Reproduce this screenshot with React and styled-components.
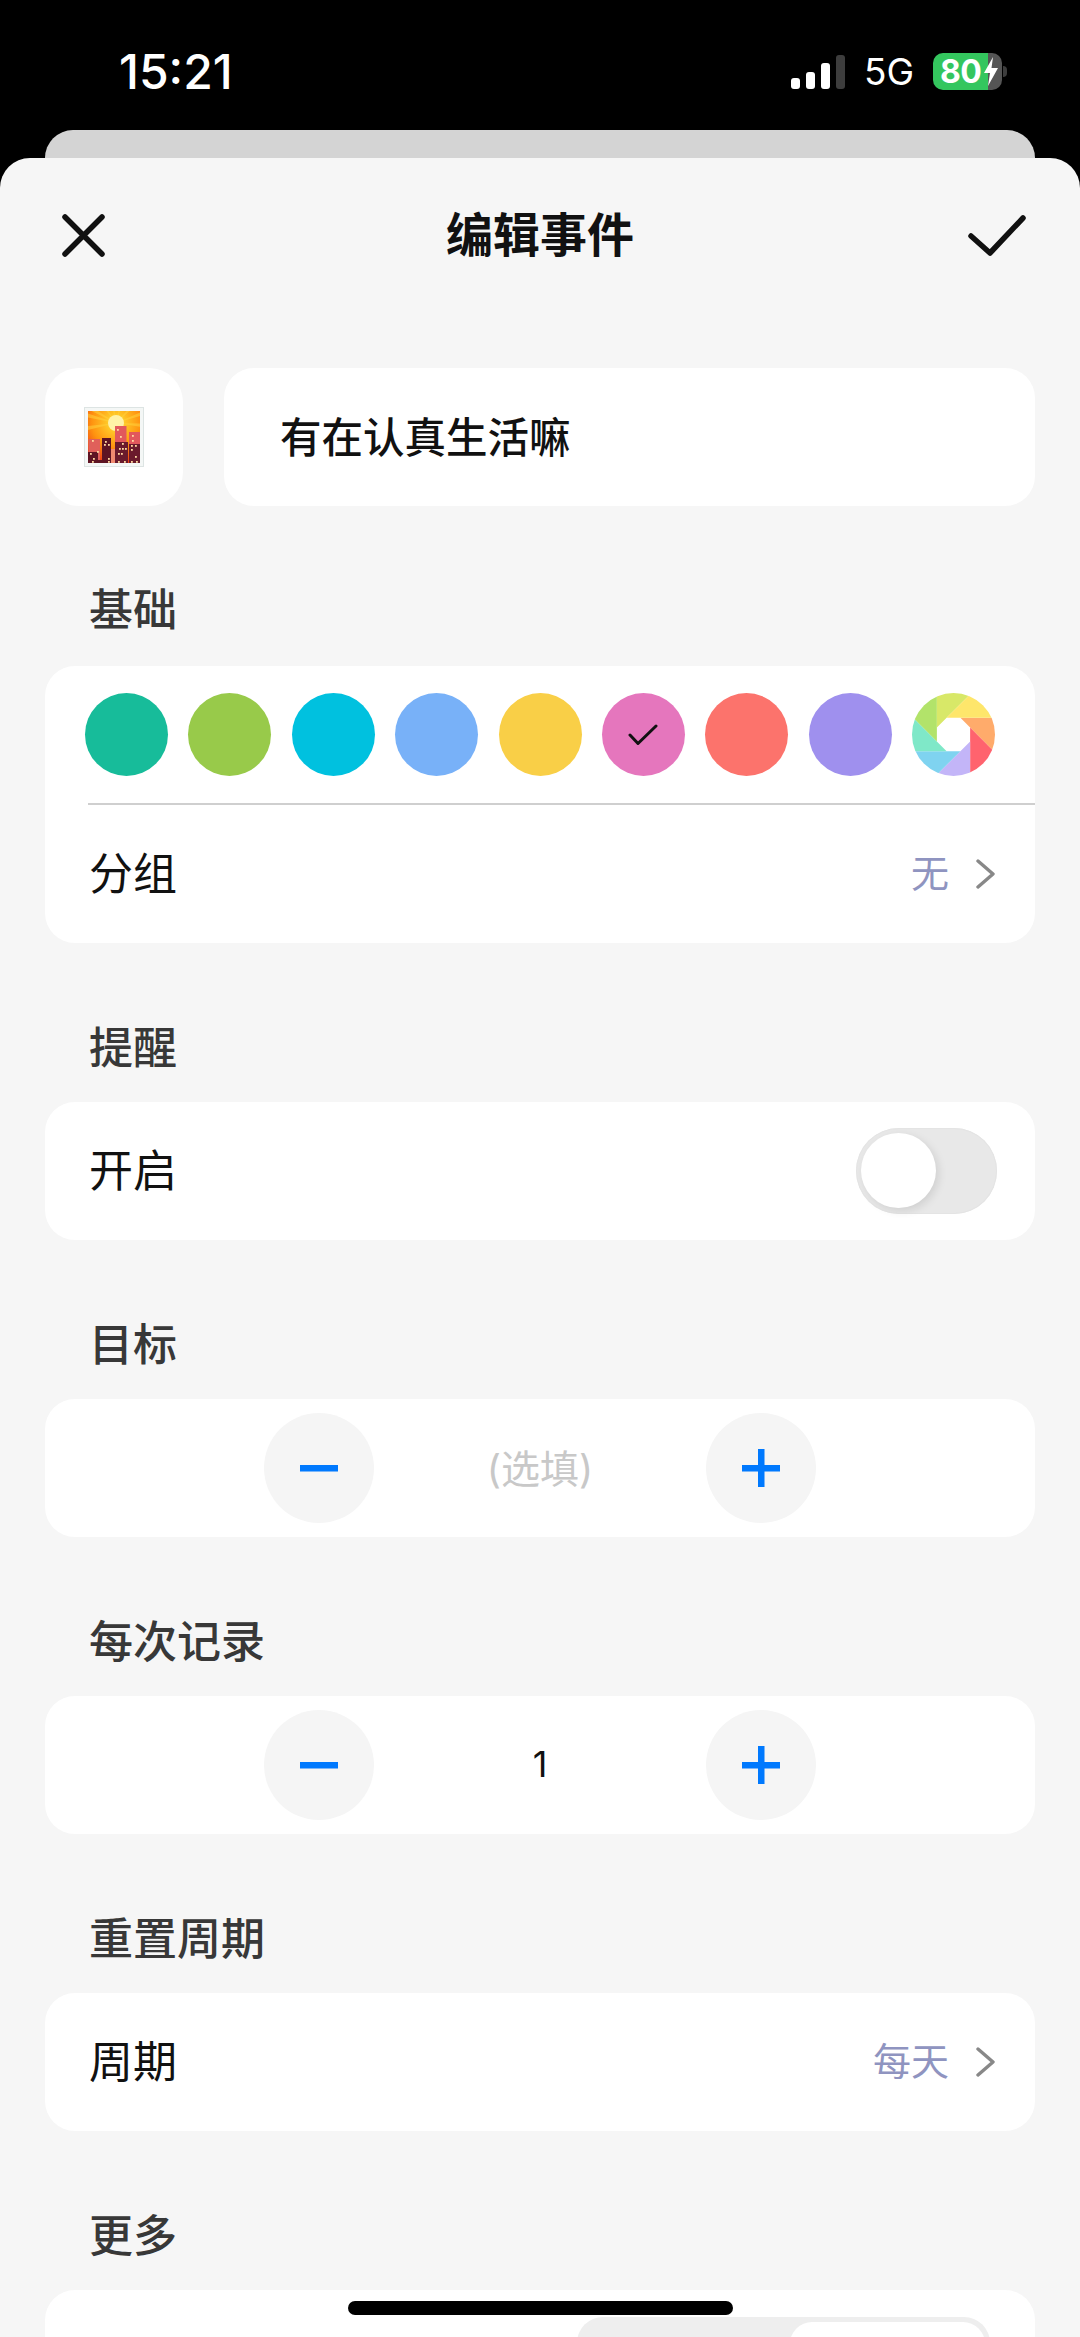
import React from 'react';
import styled, { createGlobalStyle } from 'styled-components';

const Global = createGlobalStyle`
  html, body { margin: 0; padding: 0; background: #000; }
  body { font-family: "Noto Sans CJK SC", "Noto Sans", sans-serif; }
  * { box-sizing: border-box; }
`;

const Page = styled.div`
  position: relative;
  width: 1080px;
  height: 2337px;
  overflow: hidden;
  background: #000;
`;

const StatusBar = styled.div`
  height: 130px;
  padding: 54px 78px 0 119px;
  display: flex;
  justify-content: space-between;
  align-items: flex-start;
  color: #fff;
`;

const Time = styled.div`
  font-family: Inter, sans-serif;
  font-size: 48px;
  font-weight: 500;
  line-height: 36px;
`;

const StatusRight = styled.div`
  display: flex;
  align-items: center;
  height: 37px;
  margin-top: -1px;
`;

const Signal = styled.div`
  display: flex;
  align-items: flex-end;
  gap: 6px;
  height: 34px;
`;

const SignalBar = styled.div`
  width: 9px;
  height: ${p => p.$h}px;
  border-radius: 3px;
  background: ${p => (p.$off ? '#3d3d3d' : '#fff')};
`;

const Network = styled.div`
  font-family: Inter, sans-serif;
  font-size: 37px;
  font-weight: 400;
  line-height: 37px;
  margin: 0 19px;
`;

const Battery = styled.div`
  position: relative;
  width: 69px;
  height: 37px;
  border-radius: 10px;
  background: linear-gradient(90deg, #34c65e 0 ${p => p.$level}%, #555 ${p => p.$level}% 100%);
  display: flex;
  align-items: center;
  padding-left: 7px;
  font-family: Inter, sans-serif;
  font-size: 32px;
  font-weight: 700;
  letter-spacing: -0.5px;
  line-height: 37px;
  &::after {
    content: '';
    position: absolute;
    right: -5px;
    top: 13px;
    width: 4px;
    height: 11px;
    border-radius: 0 4px 4px 0;
    background: #3d3d3d;
  }
`;

const Bolt = styled.svg`
  position: absolute;
  left: 51px;
  top: 4px;
`;

const BackCard = styled.div`
  height: 60px;
  margin: 0 45px -32px;
  border-radius: 28px 28px 0 0;
  background: #d4d4d4;
`;

const Sheet = styled.div`
  position: relative;
  height: 2179px;
  border-radius: 30px 30px 0 0;
  background: #f6f6f6;
  padding: 0 45px;
  overflow: hidden;
`;

const Header = styled.div`
  position: relative;
  height: 154px;
  margin: 0 -45px 56px;
  padding: 0 54px 0 62px;
  display: flex;
  align-items: center;
  justify-content: space-between;
`;

const Title = styled.div`
  position: absolute;
  left: 0;
  right: 0;
  padding-bottom: 6px;
  text-align: center;
  font-size: 47px;
  font-weight: 700;
  color: #111;
  line-height: 60px;
`;

const TopRow = styled.div`
  display: flex;
  gap: 41px;
  margin-bottom: 71px;
`;

const IconBox = styled.div`
  width: 138px;
  height: 138px;
  flex: none;
  border-radius: 34px;
  background: #fff;
  display: flex;
  align-items: center;
  justify-content: center;
`;

const NameField = styled.div`
  flex: 1;
  height: 138px;
  border-radius: 30px;
  background: #fff;
  padding: 0 0 4px 56px;
  display: flex;
  align-items: center;
  font-size: 41.5px;
  font-weight: 500;
  color: #111;
`;

const Section = styled.section`
  margin-bottom: 72px;
`;

const SectionLabel = styled.div`
  height: 60px;
  padding-left: 44px;
  margin-bottom: ${p => p.$gap || 27}px;
  font-size: 44px;
  line-height: 60px;
  font-weight: 500;
  color: #383838;
`;

const Card = styled.div`
  border-radius: 30px;
  background: #fff;
`;

const Swatches = styled.div`
  display: flex;
  justify-content: space-between;
  padding: 27px 40px;
`;

const Swatch = styled.div`
  width: 83px;
  height: 83px;
  border-radius: 50%;
  background: ${p => p.$color};
  display: flex;
  align-items: center;
  justify-content: center;
`;

const Divider = styled.div`
  height: 1.5px;
  margin-left: 43px;
  background: #cfcfcf;
`;

const Row = styled.div`
  height: 138px;
  padding: 0 40px 0 44px;
  display: flex;
  align-items: center;
  justify-content: space-between;
  font-size: 44px;
  color: #111;
`;

const RowText = styled.span`
  padding-bottom: 6px;
`;

const RowValue = styled.div`
  display: flex;
  align-items: center;
  gap: 27px;
  font-size: 38px;
  color: #8f94c0;
`;

const Toggle = styled.div`
  width: 141px;
  height: 86px;
  margin-right: -2px;
  border-radius: 43px;
  background: #e8e8e8;
  padding: 5px;
  box-shadow: inset 0 0 0 1px #e4e4e4;
`;

const Knob = styled.div`
  width: 75px;
  height: 75px;
  border-radius: 50%;
  background: #fff;
  box-shadow: 3px 3px 8px rgba(0, 0, 0, 0.1);
`;

const Stepper = styled.div`
  height: 138px;
  display: flex;
  align-items: center;
  justify-content: center;
`;

const StepButton = styled.div`
  width: 110px;
  height: 110px;
  border-radius: 50%;
  background: #f5f5f5;
  display: flex;
  align-items: center;
  justify-content: center;
`;

const StepValue = styled.div`
  width: 332px;
  padding-bottom: ${p => (p.$placeholder ? 4 : 2)}px;
  text-align: center;
  font-family: Inter, "Noto Sans CJK SC", sans-serif;
  font-size: ${p => (p.$placeholder ? 39 : 36)}px;
  color: ${p => (p.$placeholder ? '#c8c8c8' : '#111')};
`;

const MoreCard = styled(Card)`
  height: 138px;
  padding: 27px 45px 0 532px;
`;

const Segmented = styled.div`
  height: 90px;
  border-radius: 26px;
  background: #eeeeee;
  padding: 5px 5px 0 213px;
`;

const Segment = styled.div`
  height: 85px;
  border-radius: 22px;
  background: #fff;
`;

const HomeIndicator = styled.div`
  position: absolute;
  left: 348px;
  bottom: 22px;
  width: 385px;
  height: 14px;
  border-radius: 7px;
  background: #000;
`;

const Chevron = () => (
  <svg width="19" height="30" viewBox="0 0 19 30" fill="none">
    <path d="M2 2 L17 15 L2 28" stroke="#888" strokeWidth="3.4" strokeLinecap="round" strokeLinejoin="round" />
  </svg>
);

const Minus = () => (
  <svg width="38" height="38" viewBox="0 0 38 38"><rect x="0" y="16" width="38" height="6.5" fill="#0079fe" /></svg>
);

const Plus = () => (
  <svg width="38" height="38" viewBox="0 0 38 38">
    <rect x="0" y="16" width="38" height="6.5" fill="#0079fe" />
    <rect x="16" y="0" width="6.5" height="38" fill="#0079fe" />
  </svg>
);

const Iris = () => {
  const colors = ['#ffab6b', '#ff636e', '#c3b5f8', '#7fd3f0', '#7fe8c8', '#b2e36a', '#d8e868', '#fee66b'];
  const R = 18;
  const v = k => {
    const a = ((22.5 + 45 * k - 90) * Math.PI) / 180;
    return [R * Math.cos(a), R * Math.sin(a)];
  };
  const far = k => {
    const p = v(k);
    const q = v(k - 1);
    const dx = p[0] - q[0];
    const dy = p[1] - q[1];
    const l = Math.hypot(dx, dy);
    return [p[0] + (dx / l) * 90, p[1] + (dy / l) * 90];
  };
  return (
    <svg width="83" height="83" viewBox="-41.5 -41.5 83 83">
      <defs>
        <clipPath id="iris-clip"><circle cx="0" cy="0" r="41.5" /></clipPath>
      </defs>
      <g clipPath="url(#iris-clip)">
        {colors.map((c, k) => {
          const pts = [v(k), far(k), far(k + 1), v(k + 1)].map(p => p.join(',')).join(' ');
          return <polygon key={c} points={pts} fill={c} />;
        })}
      </g>
    </svg>
  );
};

const CityEmoji = () => {
  const windows = [
    [8, 33], [6, 46], [9, 51], [21, 34], [24, 37], [20, 37], [24, 51], [24, 54], [33, 22], [36, 29],
    [38, 36], [35, 41], [38, 41], [41, 41], [34, 46], [37, 46], [48, 28], [48, 33], [47, 38], [51, 38],
    [47, 42], [51, 49], [34, 54], [40, 54], [47, 54], [52, 54], [8, 54], [13, 44],
  ];
  const rays = [-150, -125, -100, -75, -45, -20, 5, 170, 195];
  return (
    <svg width="60" height="60" viewBox="0 0 60 60">
      <defs>
        <radialGradient id="sunset" gradientUnits="userSpaceOnUse" cx="32" cy="16" r="40">
          <stop offset="0" stopColor="#fff09a" />
          <stop offset="0.2" stopColor="#ffc928" />
          <stop offset="0.6" stopColor="#ff9410" />
          <stop offset="1" stopColor="#ee3f14" />
        </radialGradient>
        <clipPath id="sky-clip"><rect x="4" y="4" width="52" height="52" /></clipPath>
      </defs>
      <rect x="0.5" y="0.5" width="59" height="59" fill="#f4f7f6" stroke="#dde4e3" />
      <g clipPath="url(#sky-clip)">
        <rect x="4" y="4" width="52" height="52" fill="url(#sunset)" />
        {rays.map(a => (
          <path key={a} d="M32 16 L92 12 L92 20 Z" fill="#ffd23c" opacity="0.55" transform={`rotate(${a} 32 16)`} />
        ))}
        <circle cx="32" cy="16" r="8" fill="#fff2a8" />
        <rect x="4.5" y="32" width="11.5" height="24" fill="#e0605a" />
        <rect x="4" y="45" width="10" height="11" fill="#5e1423" />
        <rect x="27" y="42" width="5" height="14" fill="#f08a70" />
        <rect x="18" y="31" width="9" height="25" fill="#5e1423" />
        <rect x="14" y="53" width="10" height="3" fill="#5e1423" />
        <rect x="31" y="19" width="11.5" height="37" fill="#e2585c" />
        <rect x="31" y="35" width="13" height="21" fill="#6a1a2c" />
        <rect x="45" y="25" width="11" height="31" fill="#e2585c" />
        <rect x="45" y="37" width="11" height="19" fill="#6a1a2c" />
        {windows.map(([x, y]) => (
          <rect key={`${x}-${y}`} x={x} y={y} width="1.8" height="1.8" fill="#ffd9a0" />
        ))}
      </g>
    </svg>
  );
};

const swatches = ['#17bc9a', '#98ca4a', '#00c1df', '#78b1f8', '#f9cf47', '#e576bd', '#fc736c', '#9f90ee'];

export default function App() {
  return (
    <Page>
      <Global />
      <StatusBar>
        <Time>15:21</Time>
        <StatusRight>
          <Signal>
            <SignalBar $h={11} />
            <SignalBar $h={17} />
            <SignalBar $h={26} />
            <SignalBar $h={34} $off />
          </Signal>
          <Network>5G</Network>
          <Battery $level={80}>
            80
            <Bolt width="14" height="29" viewBox="0 0 14 29">
              <path d="M9 0 L0 16 L6 16 L4 29 L14 11 L7.5 11 Z" fill="#fff" />
            </Bolt>
          </Battery>
        </StatusRight>
      </StatusBar>
      <BackCard />
      <Sheet>
        <Header>
          <svg width="43" height="43" viewBox="0 0 43 43" fill="none">
            <path d="M3 3 L40 40 M40 3 L3 40" stroke="#111" strokeWidth="5.5" strokeLinecap="round" />
          </svg>
          <Title>编辑事件</Title>
          <svg width="58" height="41" viewBox="0 0 58 41" fill="none">
            <path d="M3 21 L22 38 L55 3" stroke="#111" strokeWidth="5.5" strokeLinecap="round" strokeLinejoin="round" />
          </svg>
        </Header>
        <TopRow>
          <IconBox><CityEmoji /></IconBox>
          <NameField>有在认真生活嘛</NameField>
        </TopRow>
        <Section>
          <SectionLabel $gap={29}>基础</SectionLabel>
          <Card>
            <Swatches>
              {swatches.map((c, i) => (
                <Swatch key={c} $color={c}>
                  {i === 5 && (
                    <svg width="30" height="22" viewBox="0 0 30 22" fill="none">
                      <path d="M2 11 L10 19.5 L28 2" stroke="#111" strokeWidth="3" strokeLinecap="round" strokeLinejoin="round" />
                    </svg>
                  )}
                </Swatch>
              ))}
              <Iris />
            </Swatches>
            <Divider />
            <Row>
              <RowText>分组</RowText>
              <RowValue><RowText>无</RowText><Chevron /></RowValue>
            </Row>
          </Card>
        </Section>
        <Section>
          <SectionLabel>提醒</SectionLabel>
          <Card>
            <Row>
              <RowText>开启</RowText>
              <Toggle><Knob /></Toggle>
            </Row>
          </Card>
        </Section>
        <Section>
          <SectionLabel>目标</SectionLabel>
          <Card>
            <Stepper>
              <StepButton><Minus /></StepButton>
              <StepValue $placeholder>(选填)</StepValue>
              <StepButton><Plus /></StepButton>
            </Stepper>
          </Card>
        </Section>
        <Section>
          <SectionLabel>每次记录</SectionLabel>
          <Card>
            <Stepper>
              <StepButton><Minus /></StepButton>
              <StepValue>1</StepValue>
              <StepButton><Plus /></StepButton>
            </Stepper>
          </Card>
        </Section>
        <Section>
          <SectionLabel>重置周期</SectionLabel>
          <Card>
            <Row>
              <RowText>周期</RowText>
              <RowValue><RowText>每天</RowText><Chevron /></RowValue>
            </Row>
          </Card>
        </Section>
        <Section>
          <SectionLabel>更多</SectionLabel>
          <MoreCard>
            <Segmented><Segment /></Segmented>
          </MoreCard>
        </Section>
      </Sheet>
      <HomeIndicator />
    </Page>
  );
}
